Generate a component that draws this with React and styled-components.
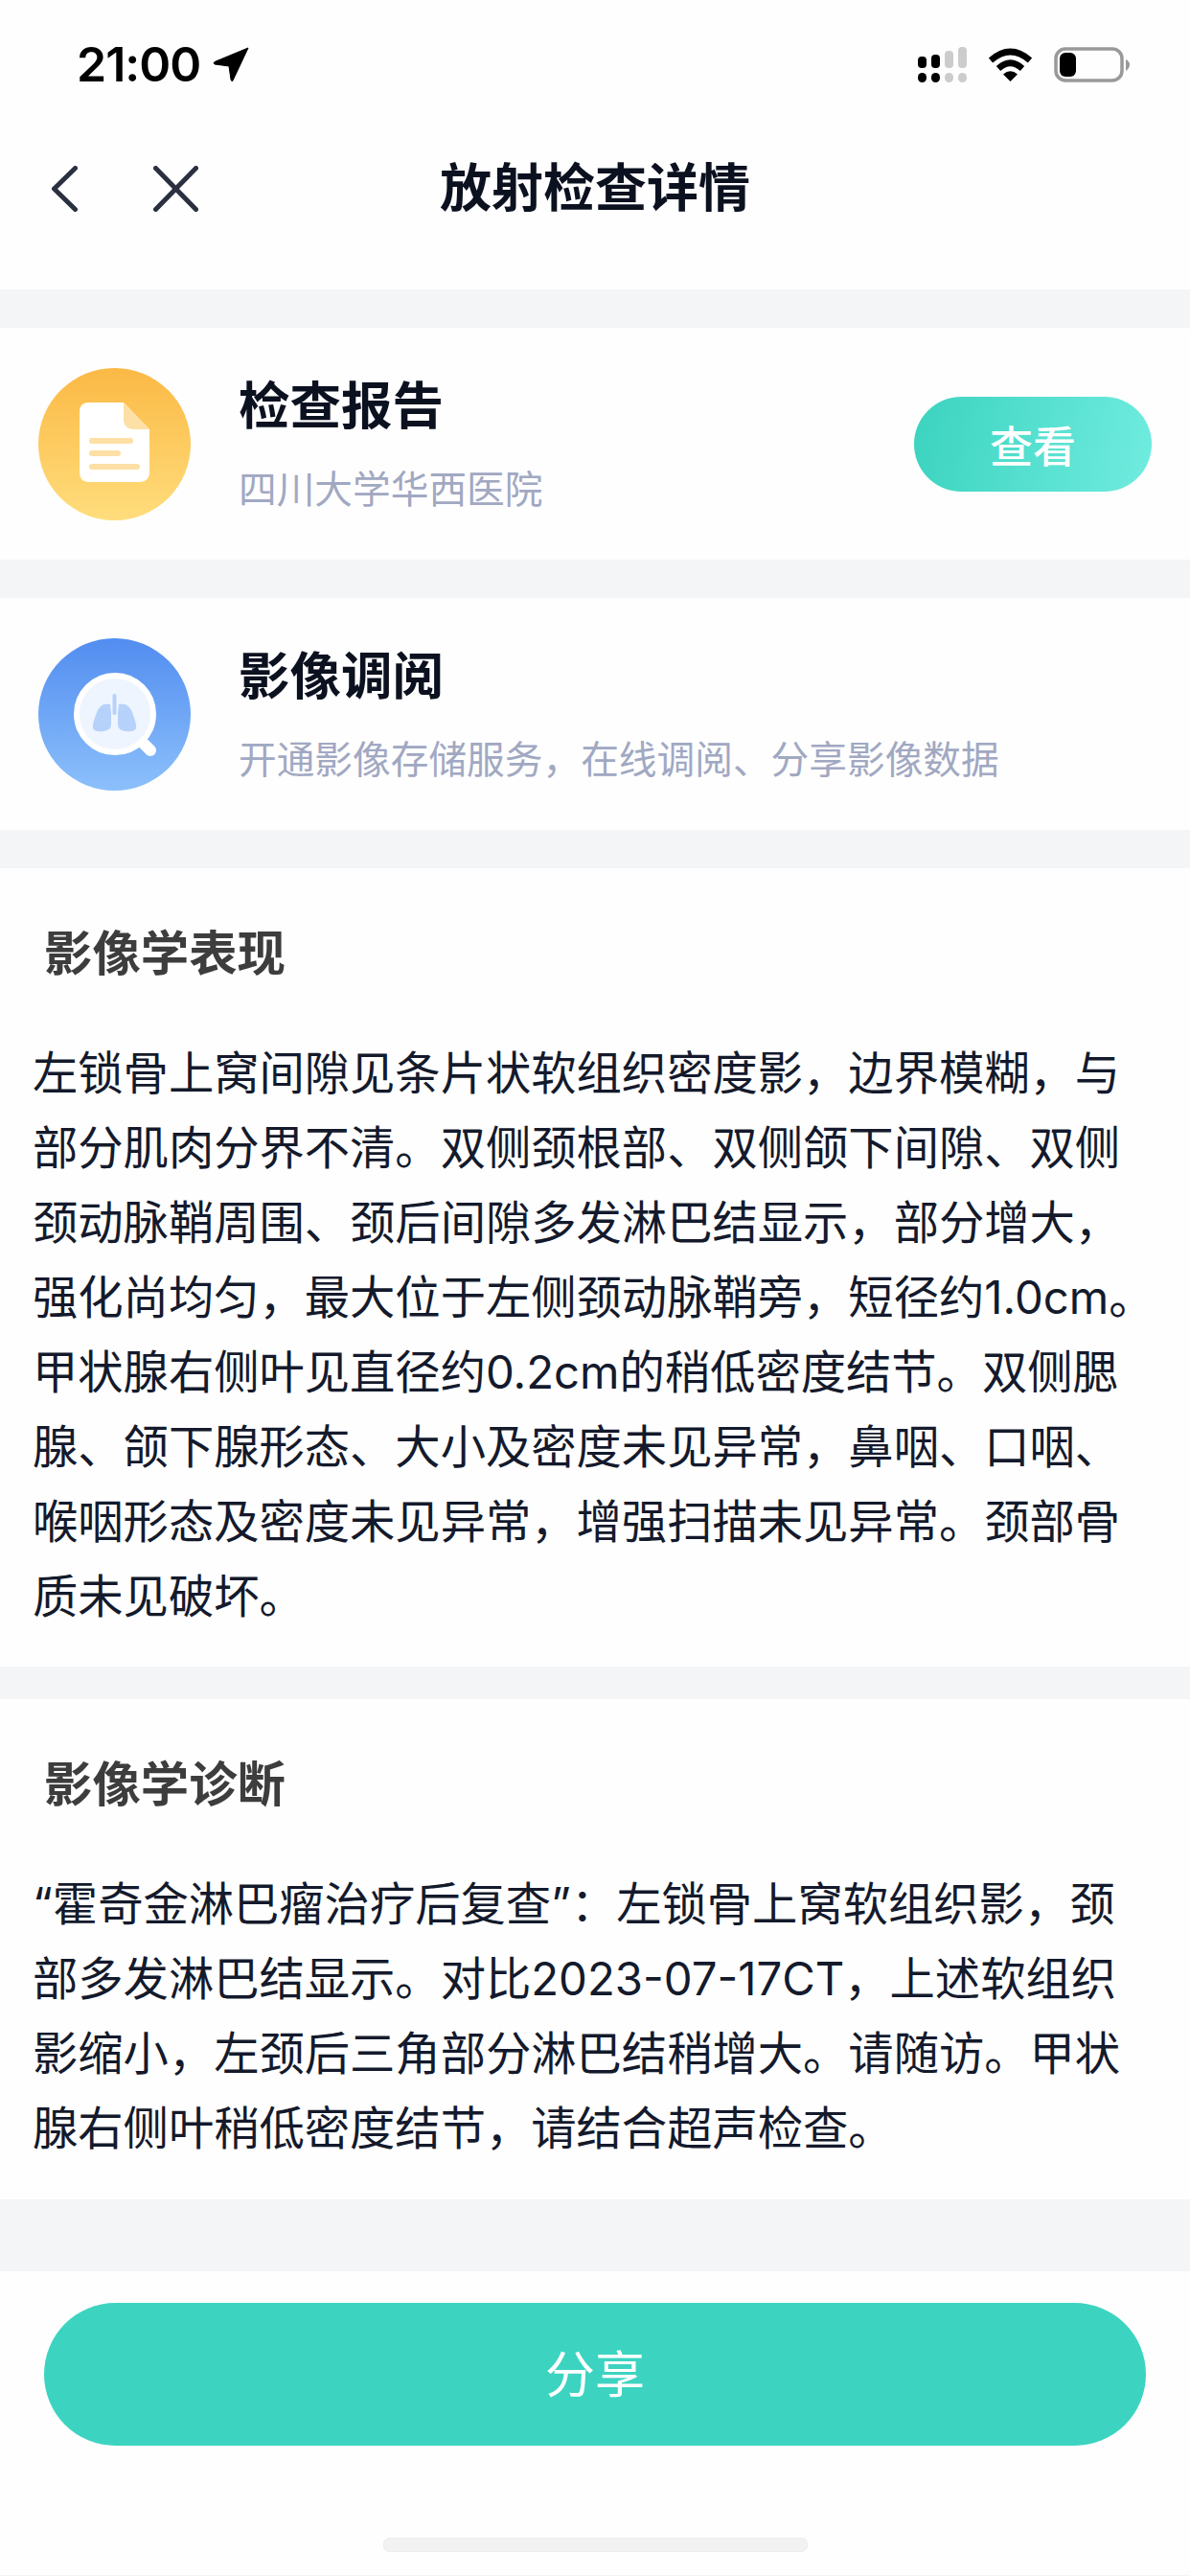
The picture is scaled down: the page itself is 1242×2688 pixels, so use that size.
import React from "react";
import styled, { createGlobalStyle } from "styled-components";

const GlobalStyle = createGlobalStyle`
  html, body {
    margin: 0;
    padding: 0;
    background: #f4f5f7;
  }
  * {
    box-sizing: border-box;
  }
`;

const Page = styled.div`
  width: 1242px;
  height: 2688px;
  overflow: hidden;
  background: #f4f5f7;
  font-family: Inter, "Noto Sans CJK SC", sans-serif;
`;

const Header = styled.header`
  height: 302px;
  background: #fefefe;
`;

const StatusBar = styled.div`
  height: 130px;
  padding: 49px 62px 0 80px;
  display: flex;
  justify-content: space-between;
  align-items: flex-start;
`;

const TimeGroup = styled.div`
  display: flex;
  align-items: center;
  gap: 13px;
  height: 37px;
`;

const Time = styled.span`
  font-size: 50px;
  font-weight: 600;
  letter-spacing: -1px;
  line-height: 37px;
  color: #000;
`;

const StatusIcons = styled.div`
  display: flex;
  align-items: flex-start;
  gap: 22px;
`;

const NavBar = styled.nav`
  height: 134px;
  display: grid;
  grid-template-columns: 1fr auto 1fr;
  align-items: center;
`;

const NavButtons = styled.div`
  display: flex;
  align-items: center;
  gap: 79px;
  padding-left: 54px;
`;

const NavTitle = styled.h1`
  margin: 0;
  font-size: 54px;
  font-weight: 700;
  line-height: 72px;
  color: #0c1120;
`;

const Card = styled.section`
  height: 242px;
  margin-top: ${(p) => p.$gap}px;
  padding: 0 40px;
  display: flex;
  align-items: center;
  background: #fefefe;
`;

const Avatar = styled.div`
  width: 159px;
  height: 159px;
  flex: none;
  border-radius: 50%;
  background: linear-gradient(180deg, ${(p) => p.$from}, ${(p) => p.$to});
  svg {
    display: block;
  }
`;

const CardText = styled.div`
  flex: 1;
  margin-left: 50px;
  padding-bottom: 3px;
`;

const CardTitle = styled.h2`
  margin: 0;
  font-size: 53.5px;
  font-weight: 700;
  line-height: 72px;
  color: #0c1120;
`;

const CardSub = styled.p`
  margin: 26px 0 0;
  font-size: 39.7px;
  font-weight: 400;
  line-height: 50px;
  color: #a1a8c2;
  white-space: nowrap;
`;

const ViewButton = styled.button`
  width: 248px;
  height: 99px;
  flex: none;
  border: 0;
  border-radius: 50px;
  background: linear-gradient(100deg, #3bd3bf, #70ecdf);
  color: #fff;
  font-family: inherit;
  font-size: 45px;
  font-weight: 500;
`;

const Section = styled.section`
  margin-top: ${(p) => p.$gap}px;
  padding: 59px 0 ${(p) => p.$bottom}px;
  background: #fefefe;
`;

const SectionTitle = styled.h3`
  margin: 0 0 56px;
  padding-left: 46px;
  font-size: 50.4px;
  font-weight: 700;
  line-height: 60px;
  color: #3d3d3d;
`;

const BodyLine = styled.div`
  padding-left: 34px;
  font-size: 47.3px;
  line-height: 78px;
  color: #141a2c;
  white-space: nowrap;
`;

const Footer = styled.footer`
  height: 317px;
  margin-top: 75px;
  padding: 33px 46px 0;
  background: #fefefe;
`;

const ShareButton = styled.button`
  display: block;
  width: 100%;
  height: 149px;
  padding: 0 0 6px;
  border: 0;
  border-radius: 75px;
  background: #3cd4c1;
  color: #fff;
  font-family: inherit;
  font-size: 52px;
  font-weight: 400;
`;

const HomeBar = styled.div`
  width: 443px;
  height: 15px;
  margin: 96px auto 0;
  border-radius: 7px;
  background: #f2f2f2;
  box-shadow: inset 0 0 0 1px #ececec;
`;

const LocationIcon = () => (
  <svg width="38" height="37" viewBox="0 0 38 37">
    <path d="M37 1 L21 35 Q20 37 19 34 L17 20 L2 18 Q0 17 2 15.5 Z" fill="#000" stroke="#000" strokeWidth="1" strokeLinejoin="round" />
  </svg>
);

const SignalIcon = () => (
  <svg width="51" height="37" viewBox="0 0 51 37">
    <rect x="0" y="10" width="9" height="12" rx="4" fill="#000" />
    <rect x="14" y="8" width="9" height="14" rx="4" fill="#000" />
    <rect x="28" y="4" width="9" height="18" rx="4" fill="#ccc" />
    <rect x="42" y="0" width="9" height="22" rx="4" fill="#ccc" />
    <rect x="0" y="27" width="9" height="10" rx="4.5" fill="#000" />
    <rect x="14" y="27" width="9" height="10" rx="4.5" fill="#000" />
    <rect x="28" y="27" width="9" height="10" rx="4.5" fill="#ccc" />
    <rect x="42" y="27" width="9" height="10" rx="4.5" fill="#ccc" />
  </svg>
);

const WifiIcon = () => (
  <svg width="47" height="37" viewBox="0 0 47 37">
    <path d="M3 14 Q23.5 -4 44 14" fill="none" stroke="#000" strokeWidth="6.5" />
    <path d="M11 22.5 Q23.5 11 36 22.5" fill="none" stroke="#000" strokeWidth="6.5" />
    <path d="M16 28.5 Q23.5 22 31 28.5 L23.5 36 Z" fill="#000" />
  </svg>
);

const BatteryIcon = () => (
  <svg width="80" height="37" viewBox="0 0 80 37">
    <rect x="2" y="2" width="69" height="33" rx="10" fill="none" stroke="#999" strokeWidth="3.5" />
    <rect x="6" y="6" width="17" height="25" rx="6" fill="#000" />
    <path d="M75 13 Q79 15 79 18.5 Q79 22 75 25 Z" fill="#999" />
  </svg>
);

const BackIcon = () => (
  <svg width="27" height="48" viewBox="0 0 27 48">
    <path d="M24.5 2.5 L2.5 24 L24.5 45.5" fill="none" stroke="#2b3040" strokeWidth="5" strokeLinecap="round" strokeLinejoin="round" />
  </svg>
);

const CloseIcon = () => (
  <svg width="47" height="48" viewBox="0 0 47 48">
    <path d="M2.5 2.5 L44.5 45.5 M44.5 2.5 L2.5 45.5" fill="none" stroke="#2b3040" strokeWidth="5" strokeLinecap="round" />
  </svg>
);

const ReportIcon = () => (
  <svg width="159" height="159" viewBox="0 0 159 159">
    <path d="M52 36 H89 L116 64 V108 Q116 119 105 119 H52 Q43 119 43 108 V46 Q43 36 52 36 Z" fill="#fff" />
    <path d="M89 36 L116 64 H100 Q89 64 89 53 Z" fill="#fde0a5" />
    <rect x="53" y="73" width="46" height="6" rx="3" fill="#fde0a5" />
    <rect x="53" y="86" width="33" height="6" rx="3" fill="#fde0a5" />
    <rect x="53" y="100" width="53" height="6" rx="3" fill="#fde0a5" />
  </svg>
);

const ImagingIcon = () => (
  <svg width="159" height="159" viewBox="0 0 159 159">
    <path d="M108 108 L117 117" stroke="#fff" strokeWidth="12" strokeLinecap="round" />
    <circle cx="80" cy="79" r="40" fill="#eff5fe" stroke="#fff" strokeWidth="6" />
    <rect x="77.5" y="58" width="4" height="22" rx="2" fill="#b6d2fb" />
    <path d="M75 69 Q64 66 60 80 Q56 91 57 94 Q59 98 68 97 Q76 96 76 90 V78 Z" fill="#b6d2fb" />
    <path d="M84 69 Q95 66 99 80 Q103 91 102 94 Q100 98 91 97 Q83 96 83 90 V78 Z" fill="#b6d2fb" />
  </svg>
);

const findings = [
  "左锁骨上窝间隙见条片状软组织密度影，边界模糊，与",
  "部分肌肉分界不清。双侧颈根部、双侧颌下间隙、双侧",
  "颈动脉鞘周围、颈后间隙多发淋巴结显示，部分增大，",
  "强化尚均匀，最大位于左侧颈动脉鞘旁，短径约1.0cm。",
  "甲状腺右侧叶见直径约0.2cm的稍低密度结节。双侧腮",
  "腺、颌下腺形态、大小及密度未见异常，鼻咽、口咽、",
  "喉咽形态及密度未见异常，增强扫描未见异常。颈部骨",
  "质未见破坏。",
];

const diagnosis = [
  "“霍奇金淋巴瘤治疗后复查”：左锁骨上窝软组织影，颈",
  "部多发淋巴结显示。对比2023-07-17CT，上述软组织",
  "影缩小，左颈后三角部分淋巴结稍增大。请随访。甲状",
  "腺右侧叶稍低密度结节，请结合超声检查。",
];

export default function App() {
  return (
    <Page lang="zh-CN">
      <GlobalStyle />
      <Header>
        <StatusBar>
          <TimeGroup>
            <Time>21:00</Time>
            <LocationIcon />
          </TimeGroup>
          <StatusIcons>
            <SignalIcon />
            <WifiIcon />
            <BatteryIcon />
          </StatusIcons>
        </StatusBar>
        <NavBar>
          <NavButtons>
            <BackIcon />
            <CloseIcon />
          </NavButtons>
          <NavTitle>放射检查详情</NavTitle>
        </NavBar>
      </Header>

      <Card $gap={40}>
        <Avatar $from="#fbb945" $to="#ffdd7c">
          <ReportIcon />
        </Avatar>
        <CardText>
          <CardTitle>检查报告</CardTitle>
          <CardSub>四川大学华西医院</CardSub>
        </CardText>
        <ViewButton>查看</ViewButton>
      </Card>

      <Card $gap={40}>
        <Avatar $from="#528df0" $to="#8cc0fb">
          <ImagingIcon />
        </Avatar>
        <CardText>
          <CardTitle>影像调阅</CardTitle>
          <CardSub>开通影像存储服务，在线调阅、分享影像数据</CardSub>
        </CardText>
      </Card>

      <Section $gap={40} $bottom={34}>
        <SectionTitle>影像学表现</SectionTitle>
        {findings.map((line) => (
          <BodyLine key={line}>{line}</BodyLine>
        ))}
      </Section>

      <Section $gap={34} $bottom={35}>
        <SectionTitle>影像学诊断</SectionTitle>
        {diagnosis.map((line) => (
          <BodyLine key={line}>{line}</BodyLine>
        ))}
      </Section>

      <Footer>
        <ShareButton>分享</ShareButton>
        <HomeBar />
      </Footer>
    </Page>
  );
}
